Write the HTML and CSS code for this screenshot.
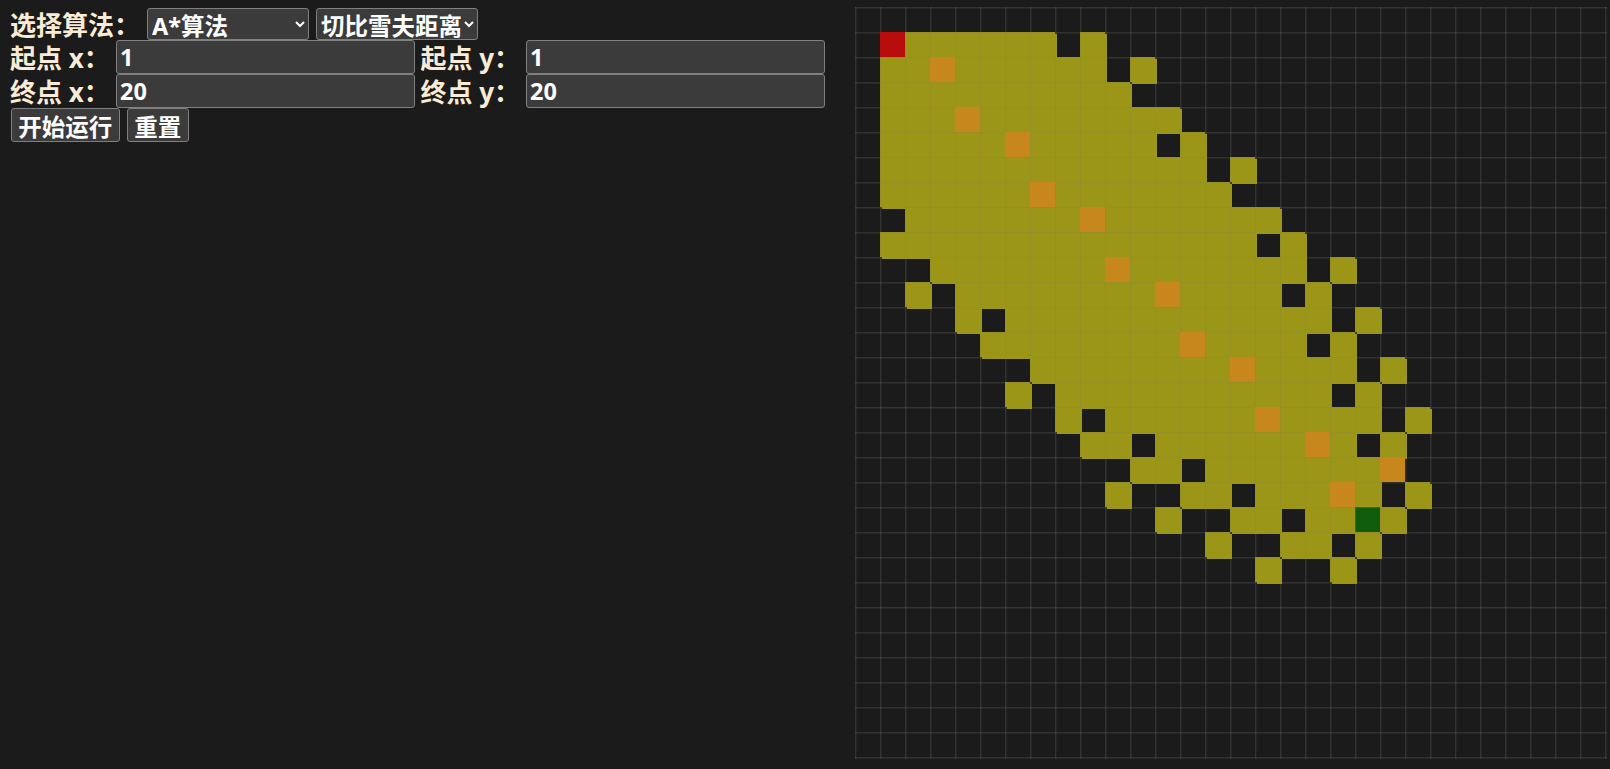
FILE: index.html
```html
<!DOCTYPE html>
<html lang="zh-CN">

<head>
    <meta charset="UTF-8">
    <meta name="viewport" content="width=device-width, initial-scale=1.0">
    <title>寻路算法</title>
    <link rel="stylesheet" href="styles.css">
</head>

<body>
    <div class="page">
        <div class="panel">
            <div class="row row-select">
                <label class="label-algo">选择算法：</label>
                <select class="select-algo">
                    <option>A*算法</option>
                </select>
                <select class="select-dist">
                    <option>切比雪夫距离</option>
                </select>
            </div>
            <div class="row">
                <label class="label-point">起点 x：</label>
                <input class="num" type="text" value="1">
                <label class="label-point label-y">起点 y：</label>
                <input class="num" type="text" value="1">
            </div>
            <div class="row">
                <label class="label-point">终点 x：</label>
                <input class="num" type="text" value="20">
                <label class="label-point label-y">终点 y：</label>
                <input class="num" type="text" value="20">
            </div>
            <div class="row row-btn">
                <button class="btn btn-run">开始运行</button>
                <button class="btn btn-reset">重置</button>
            </div>
        </div>
        <div class="board" id="board"></div>
    </div>
    <script src="grid.js"></script>
</body>

</html>
```

FILE: styles.css
```css
* {
    padding: 0;
    margin: 0;
    box-sizing: border-box;
}

html,
body {
    height: 100%;
    overflow: hidden;
}

body {
    background-color: #1b1b1b;
    color: #faebd7;
    color-scheme: dark;
    font-family: "Noto Sans", "Noto Sans CJK SC", sans-serif;
    font-size: 26px;
    font-weight: 700;
}

.page {
    display: flex;
    padding: 7px 0 0 10px;
}

.panel {
    width: 845px;
    flex: none;
    padding-top: 1px;
}

.row {
    display: flex;
    align-items: center;
    height: 34px;
}

.row-select {
    height: 32px;
}

.row-btn {
    gap: 7.5px;
    padding-left: 1px;
}

.label-algo {
    width: 137px;
    white-space: nowrap;
}

.label-point {
    width: 106px;
    white-space: nowrap;
}

.label-y {
    width: 105.5px;
    margin-left: 6px;
}

select,
input,
button {
    font: inherit;
    font-size: 23.5px;
    color: #fff;
    background-color: #3b3b3b;
    border: 1px solid #808080;
    border-radius: 3px;
}

.select-algo {
    width: 161.5px;
    height: 32px;
    margin-right: 7.5px;
}

.select-dist {
    width: 162px;
    height: 32px;
}

.num {
    width: 298.5px;
    height: 34px;
    padding: 0 3px;
}

.btn {
    height: 34px;
    padding: 0;
}

.btn-run {
    width: 108.5px;
}

.btn-reset {
    width: 61.5px;
}

.board {
    display: grid;
    grid-template-columns: repeat(30, 25px);
    grid-auto-rows: 25px;
    flex: none;
    width: 752px;
    height: 752px;
    background-image:
        linear-gradient(to right, rgba(200, 200, 170, 0.13) 1px, rgba(200, 200, 170, 0.06) 1px, rgba(200, 200, 170, 0.06) 2px, transparent 2px),
        linear-gradient(to bottom, rgba(200, 200, 170, 0.13) 1px, rgba(200, 200, 170, 0.06) 1px, rgba(200, 200, 170, 0.06) 2px, transparent 2px);
    background-size: 25px 25px;
}

.open {
    background-color: #9c9618;
    border-left: 1px solid #949024;
    border-top: 1px solid #949024;
    box-shadow: 2px 2px 0 #9c9618;
}

.path {
    background-color: #c8871c;
}

.start {
    background-color: #b70d0c;
}

.end {
    background-color: #0f5d0a;
    border-left: 1px solid #2c6e22;
    border-top: 1px solid #2c6e22;
}
```

FILE: grid.js
```js
// 地图: o 已搜索, p 路径, s 起点, e 终点
var rows = [
    "",
    ".soooooo.o",
    ".oopoooooo.o",
    ".oooooooooo",
    ".ooopoooooooo",
    ".ooooopooooo.o",
    ".ooooooooooooo.o",
    ".oooooopooooooo",
    "..ooooooopooooooo",
    ".ooooooooooooooo.o",
    "...ooooooopooooooo.o",
    "..o.oooooooopoooo.o",
    "....o.ooooooooooooo.o",
    ".....oooooooopoooo.o",
    ".......oooooooopoooo.o",
    "......o.ooooooooooo.o",
    "........o.oooooopoooo.o",
    ".........oo.oooooopo.o",
    "...........oo.ooooooop",
    "..........o..oo.ooopo.o",
    "............o..oo.ooeo",
    "..............o..oo.o",
    "................o..o"
];
var names = { o: "open", p: "path", s: "start", e: "end" };
var board = document.getElementById("board");

for (var r = 0; r < 30; r++) {
    var row = rows[r] || "";
    for (var c = 0; c < 30; c++) {
        var cell = document.createElement("div");
        var type = names[row.charAt(c)];
        if (type) {
            cell.className = type;
        }
        board.appendChild(cell);
    }
}
```
